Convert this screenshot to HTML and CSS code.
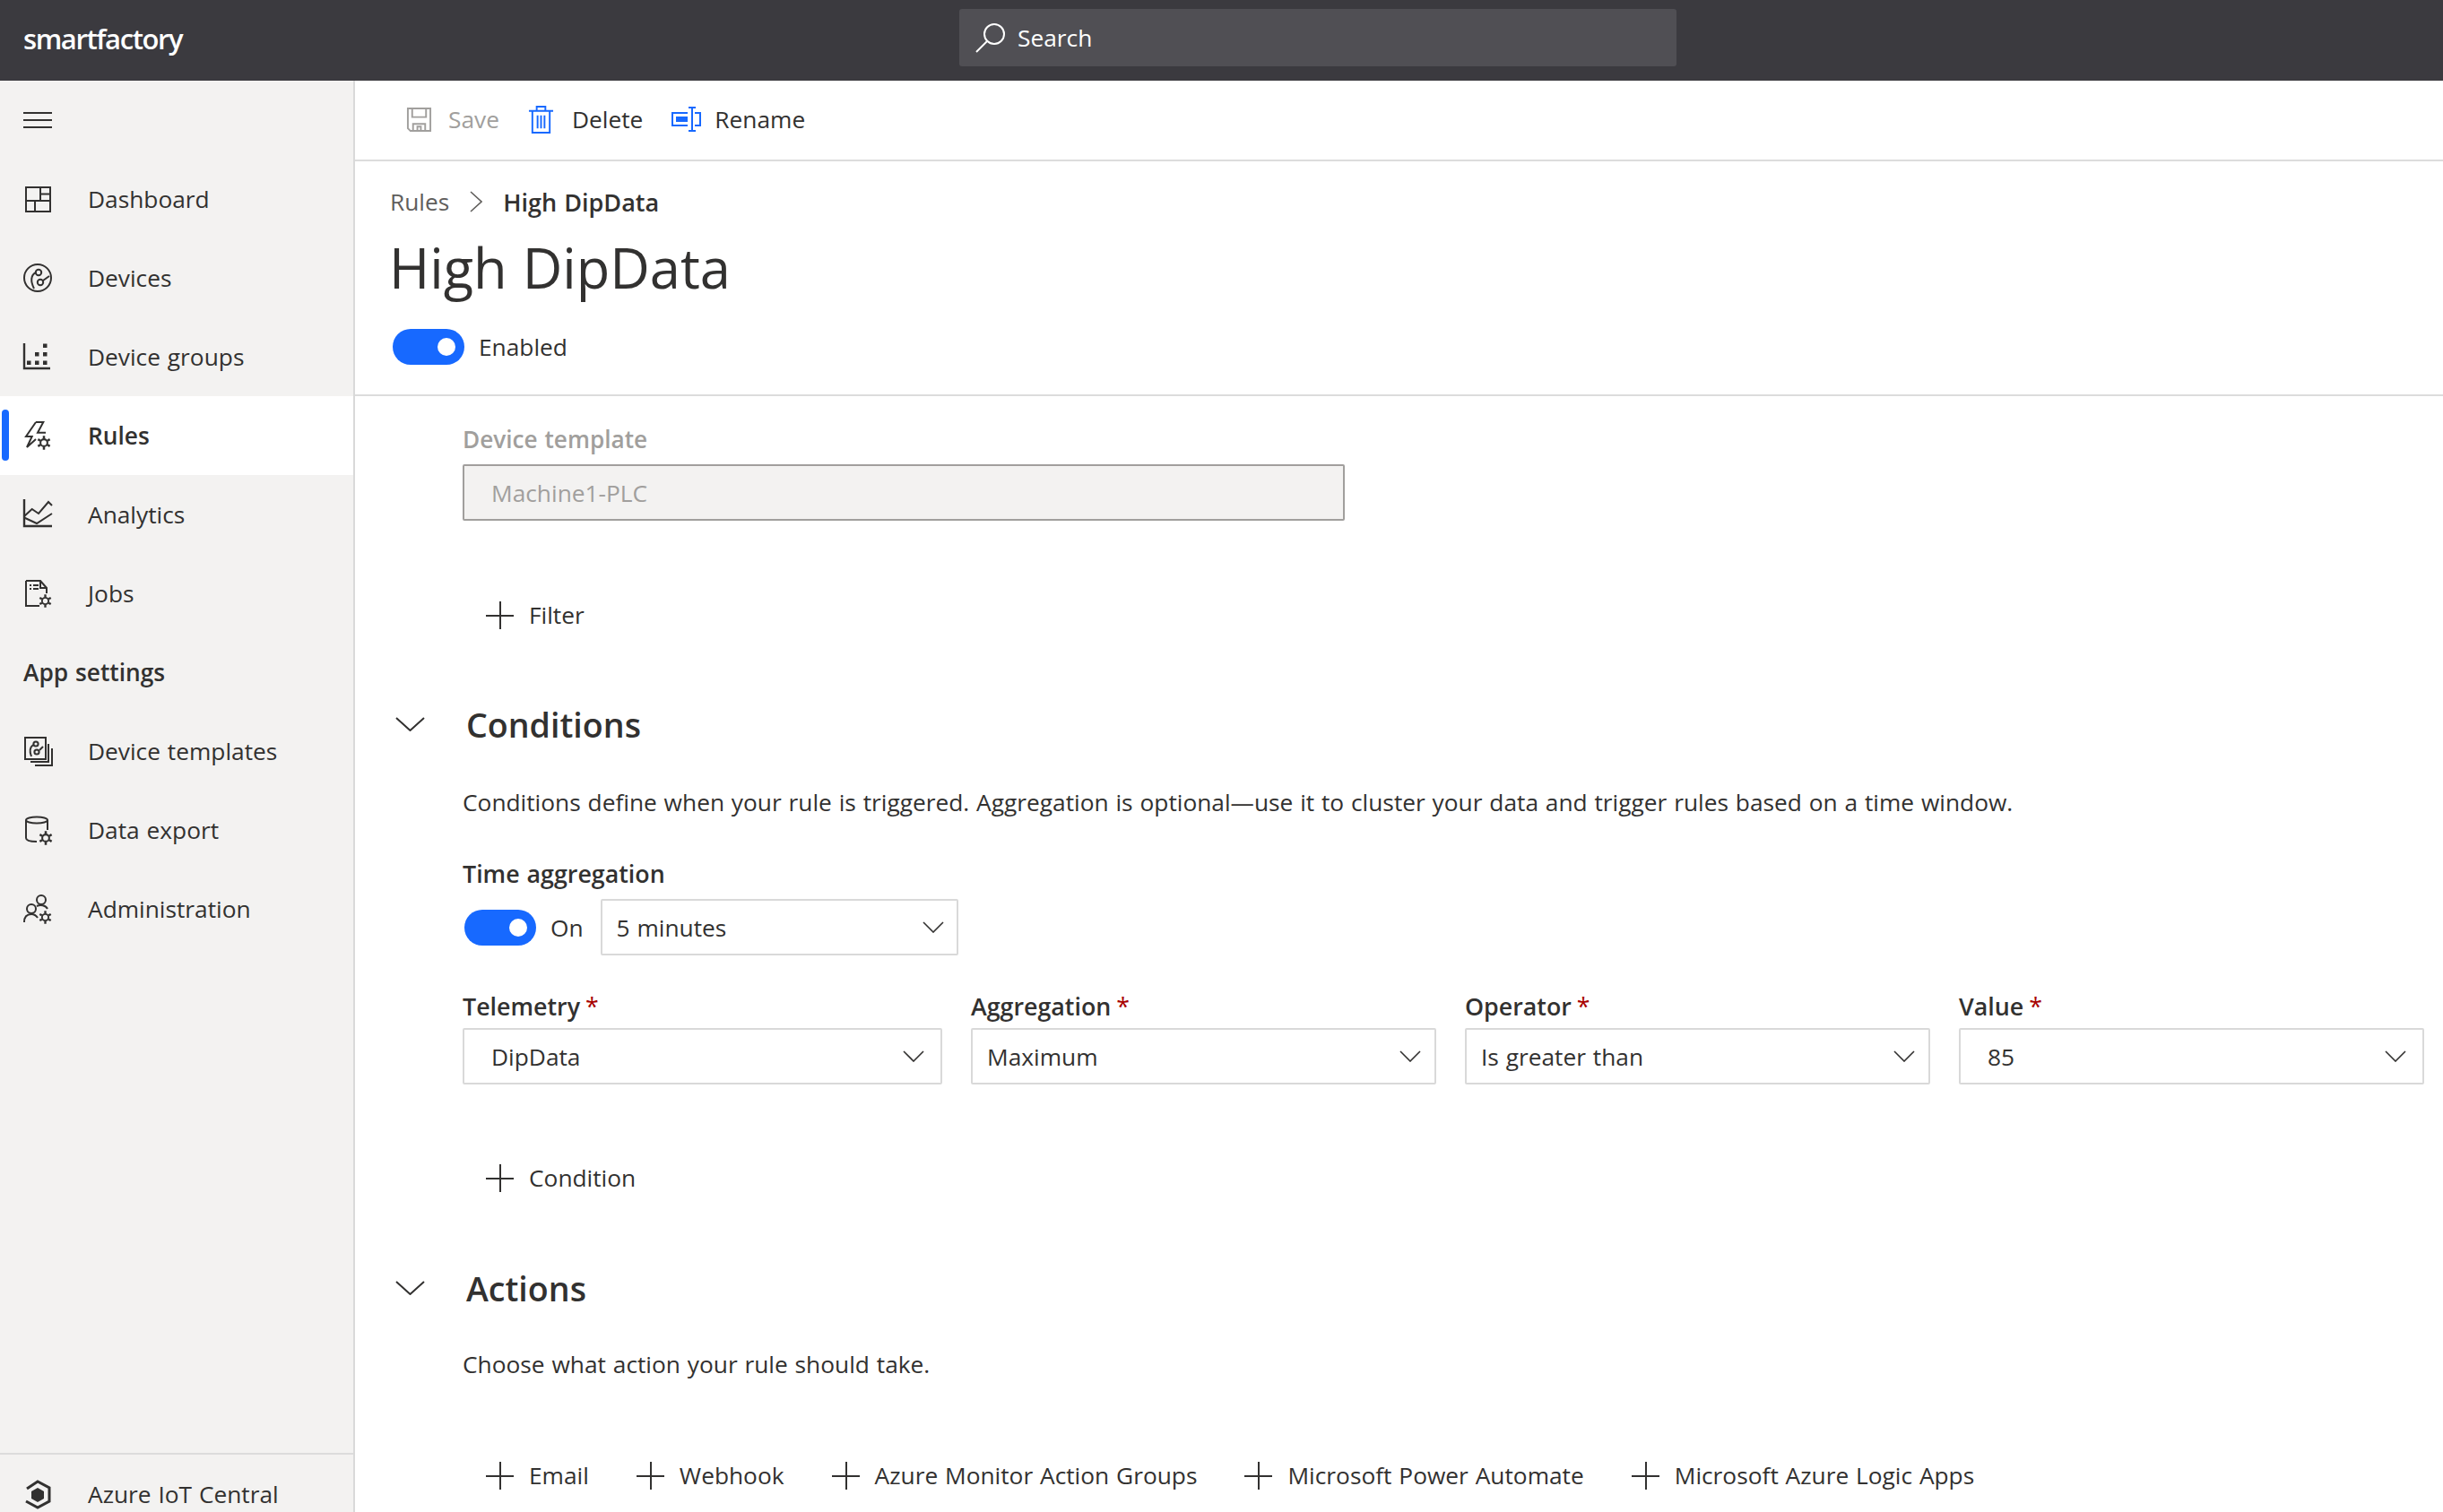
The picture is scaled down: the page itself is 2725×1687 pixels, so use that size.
FILE: index.html
```html
<!DOCTYPE html>
<html>
<head>
    <title>High DipData - smartfactory</title>
    <link rel="stylesheet" href="styles.css">
</head>
<body>
    <svg class="defs" width="0" height="0">
        <symbol id="gear" viewBox="0 0 14 14">
            <circle cx="7" cy="7" r="3.4" fill="none" stroke="currentColor" stroke-width="1.8"/>
            <path d="M7 0.3V3M7 11V13.7M1.2 3.65L3.5 5M10.5 9L12.8 10.35M1.2 10.35L3.5 9M10.5 5L12.8 3.65" fill="none" stroke="currentColor" stroke-width="2.2"/>
        </symbol>
    </svg>

    <header class="topbar">
        <div class="logo">smartfactory</div>
        <div class="search">
            <svg class="search-icon" viewBox="0 0 34 34"><circle cx="21" cy="13" r="11" fill="none" stroke="currentColor" stroke-width="2"/><path d="M13 21L1 33" fill="none" stroke="currentColor" stroke-width="2"/></svg>
            <span>Search</span>
        </div>
    </header>

    <div class="app">
        <nav class="sidebar">
            <div class="nav-item">
                <svg class="nav-icon" viewBox="0 0 34 34"><path d="M1 9H33M1 17H33M1 25H33" fill="none" stroke="currentColor" stroke-width="2"/></svg>
            </div>
            <a class="nav-item">
                <svg class="nav-icon" viewBox="0 0 34 34"><path d="M4 4H31V31H4ZM20 4V19M4 19H31M20 11.5H31M14 19V31" fill="none" stroke="currentColor" stroke-width="2"/></svg>
                <span>Dashboard</span>
            </a>
            <a class="nav-item">
                <svg class="nav-icon" viewBox="0 0 34 34"><circle cx="17" cy="17" r="15" fill="none" stroke="currentColor" stroke-width="2"/><circle cx="18" cy="11" r="3.2" fill="none" stroke="currentColor" stroke-width="2"/><circle cx="20" cy="22" r="3.2" fill="none" stroke="currentColor" stroke-width="2"/><path d="M15 11C9 14 9 21 13 29M23 20L30 15" fill="none" stroke="currentColor" stroke-width="2"/></svg>
                <span>Devices</span>
            </a>
            <a class="nav-item">
                <svg class="nav-icon" viewBox="0 0 34 34"><path d="M2 2V30H31" fill="none" stroke="currentColor" stroke-width="2.4"/><path d="M5 21.5h4.5v4.5h-4.5zM14 21.5h4.5v4.5h-4.5zM23 21.5h4.5v4.5h-4.5zM14 12h4.5v4.5h-4.5zM23 12h4.5v4.5h-4.5zM23 2.5h4.5v4.5h-4.5z" fill="currentColor"/></svg>
                <span>Device groups</span>
            </a>
            <a class="nav-item active">
                <svg class="nav-icon" viewBox="0 0 34 34"><path d="M15 2L4 18H10.7L5 30L15 21M15 2H23.3L17 13.7H26" fill="none" stroke="currentColor" stroke-width="2"/><use href="#gear" x="16" y="17" width="16" height="16"/></svg>
                <span>Rules</span>
            </a>
            <a class="nav-item">
                <svg class="nav-icon" viewBox="0 0 34 34"><path d="M2 0V30H33" fill="none" stroke="currentColor" stroke-width="2.4"/><path d="M2 19L10.7 11L18 16L29 3L33 7M2 20.5L16 27L33 16" fill="none" stroke="currentColor" stroke-width="2"/></svg>
                <span>Analytics</span>
            </a>
            <a class="nav-item">
                <svg class="nav-icon" viewBox="0 0 34 34"><path d="M4 3H20L27 11V17M20 3V11H27M19 31H4V3" fill="none" stroke="currentColor" stroke-width="2"/><path d="M8 7h2v2h-2zM12 7h6v2h-6zM8 11h2v2h-2zM12 11h6v2h-6z" fill="currentColor"/><use href="#gear" x="18" y="18" width="15" height="15"/></svg>
                <span>Jobs</span>
            </a>
            <div class="nav-item nav-heading">App settings</div>
            <a class="nav-item">
                <svg class="nav-icon" viewBox="0 0 34 34"><path d="M3 2H26V26H3Z" fill="none" stroke="currentColor" stroke-width="2"/><path d="M29 9V29H9M33 14V33H14" fill="none" stroke="currentColor" stroke-width="2"/><circle cx="15" cy="9" r="2.6" fill="none" stroke="currentColor" stroke-width="2"/><circle cx="16" cy="18" r="2.6" fill="none" stroke="currentColor" stroke-width="2"/><path d="M12 10C8 13 8 18 10 23M19 16L23 12" fill="none" stroke="currentColor" stroke-width="2"/></svg>
                <span>Device templates</span>
            </a>
            <a class="nav-item">
                <svg class="nav-icon" viewBox="0 0 34 34"><ellipse cx="16" cy="6" rx="12" ry="3.5" fill="none" stroke="currentColor" stroke-width="2"/><path d="M4 6V26C4 29 9 30 16 30M28 6V17" fill="none" stroke="currentColor" stroke-width="2"/><use href="#gear" x="18" y="18" width="16" height="16"/></svg>
                <span>Data export</span>
            </a>
            <a class="nav-item">
                <svg class="nav-icon" viewBox="0 0 34 34"><circle cx="21" cy="7" r="5" fill="none" stroke="currentColor" stroke-width="2"/><circle cx="10" cy="17" r="5" fill="none" stroke="currentColor" stroke-width="2"/><path d="M2 32C2 26 5 23 10 23C13 23 15 24 17 27M16 14C20 12 26 13 28 17" fill="none" stroke="currentColor" stroke-width="2"/><use href="#gear" x="18" y="19" width="15" height="15"/></svg>
                <span>Administration</span>
            </a>
            <div class="nav-bottom">
                <a class="nav-item">
                    <svg class="nav-icon" viewBox="0 0 34 34"><path d="M5 11L17 3L30 10V25L17 32L4 25" fill="none" stroke="currentColor" stroke-width="3"/><path d="M17 10L24 14V22L17 26L10 22V14Z" fill="currentColor"/></svg>
                    <span>Azure IoT Central</span>
                </a>
            </div>
        </nav>

        <main class="main">
            <div class="toolbar">
                <button class="tool disabled">
                    <svg class="tool-icon" viewBox="0 0 30 30"><path d="M2 2H28V28H5L2 25Z M7 2V12H23V2 M8 28V20H22V28 M13 28V23H17V28" fill="none" stroke="currentColor" stroke-width="2"/></svg>
                    <span>Save</span>
                </button>
                <button class="tool tool-delete">
                    <svg class="tool-icon blue" viewBox="0 0 30 34"><path d="M1 7H29M5 7V32H25V7M10 7V2H20V7M11 12V27M15 12V27M19 12V27" fill="none" stroke="currentColor" stroke-width="2"/></svg>
                    <span>Delete</span>
                </button>
                <button class="tool tool-rename">
                    <svg class="tool-icon wide blue" viewBox="0 0 34 30"><path d="M18 8H1V22H18M26 8H32V22H26M19 2H27M19 28H27M23 2V28" fill="none" stroke="currentColor" stroke-width="2"/><path d="M5 12H18V18H5Z" fill="currentColor"/></svg>
                    <span>Rename</span>
                </button>
            </div>

            <div class="head">
                <div class="crumbs">
                    <span class="crumb-link">Rules</span>
                    <svg class="crumb-sep" viewBox="0 0 14 24"><path d="M1 1L13 12L1 23" fill="none" stroke="currentColor" stroke-width="1.6"/></svg>
                    <span class="crumb-current">High DipData</span>
                </div>
                <h1>High DipData</h1>
                <div class="toggle-row">
                    <span class="toggle"></span>
                    <span>Enabled</span>
                </div>
            </div>

            <div class="form">
                <label class="label label-first disabled-label">Device template</label>
                <div class="input-disabled">Machine1-PLC</div>
                <button class="add add-filter"><span class="plus"></span>Filter</button>

                <div class="section-head section-conditions">
                    <svg class="section-chevron" viewBox="0 0 33 16"><path d="M1 1L16.5 15L32 1" fill="none" stroke="currentColor" stroke-width="2"/></svg>
                    <h2>Conditions</h2>
                </div>
                <p class="desc">Conditions define when your rule is triggered. Aggregation is optional—use it to cluster your data and trigger rules based on a time window.</p>

                <label class="label label-time">Time aggregation</label>
                <div class="time-row">
                    <span class="toggle"></span>
                    <span class="on-text">On</span>
                    <div class="select select-time">
                        <span>5 minutes</span>
                        <svg class="chevron" viewBox="0 0 24 13"><path d="M1 1L12 12L23 1" fill="none" stroke="currentColor" stroke-width="1.6"/></svg>
                    </div>
                </div>

                <div class="fields">
                    <div>
                        <label class="label">Telemetry <em>*</em></label>
                        <div class="select pad-wide"><span>DipData</span><svg class="chevron" viewBox="0 0 24 13"><path d="M1 1L12 12L23 1" fill="none" stroke="currentColor" stroke-width="1.6"/></svg></div>
                    </div>
                    <div>
                        <label class="label">Aggregation <em>*</em></label>
                        <div class="select"><span>Maximum</span><svg class="chevron" viewBox="0 0 24 13"><path d="M1 1L12 12L23 1" fill="none" stroke="currentColor" stroke-width="1.6"/></svg></div>
                    </div>
                    <div>
                        <label class="label">Operator <em>*</em></label>
                        <div class="select"><span>Is greater than</span><svg class="chevron" viewBox="0 0 24 13"><path d="M1 1L12 12L23 1" fill="none" stroke="currentColor" stroke-width="1.6"/></svg></div>
                    </div>
                    <div>
                        <label class="label">Value <em>*</em></label>
                        <div class="select pad-wide"><span>85</span><svg class="chevron" viewBox="0 0 24 13"><path d="M1 1L12 12L23 1" fill="none" stroke="currentColor" stroke-width="1.6"/></svg></div>
                    </div>
                </div>

                <button class="add add-condition"><span class="plus"></span>Condition</button>

                <div class="section-head section-actions">
                    <svg class="section-chevron" viewBox="0 0 33 16"><path d="M1 1L16.5 15L32 1" fill="none" stroke="currentColor" stroke-width="2"/></svg>
                    <h2>Actions</h2>
                </div>
                <p class="desc desc-actions">Choose what action your rule should take.</p>

                <div class="action-row">
                    <button class="add"><span class="plus"></span>Email</button>
                    <button class="add"><span class="plus"></span>Webhook</button>
                    <button class="add"><span class="plus"></span>Azure Monitor Action Groups</button>
                    <button class="add"><span class="plus"></span>Microsoft Power Automate</button>
                    <button class="add"><span class="plus"></span>Microsoft Azure Logic Apps</button>
                </div>
            </div>
        </main>
    </div>
</body>
</html>
```

FILE: styles.css
```css
* { box-sizing: border-box; }
html, body { height: 100%; }
body { margin: 0; overflow: hidden; background: #fff; color: #323130; font-family: "Open Sans", "Noto Sans", sans-serif; font-size: 26.3px; word-spacing: 1px; }
.defs { position: absolute; }
button { font: inherit; word-spacing: inherit; color: inherit; background: none; border: none; padding: 0; }

.topbar { height: 90px; background: #3b3a3f; display: flex; align-items: flex-start; color: #fff; }
.logo { width: 1070px; padding-left: 26px; padding-top: 22px; font-size: 31px; font-weight: 600; letter-spacing: -1.4px; }
.search { width: 800px; height: 64px; margin-top: 10px; background: #504f54; border-radius: 3px; display: flex; align-items: center; padding-left: 18px; gap: 13px; }
.search-icon { width: 34px; height: 34px; }

.app { display: flex; height: calc(100% - 90px); }

.sidebar { width: 396px; flex: none; background: #f3f2f1; border-right: 2px solid #d9d9d9; display: flex; flex-direction: column; }
.nav-item { height: 88px; flex: none; display: flex; align-items: center; padding-left: 25px; gap: 39px; }
.nav-icon { width: 34px; height: 34px; flex: none; }
.nav-heading { font-weight: 600; padding-left: 26px; }
.nav-item.active { background: #fff; font-weight: 600; position: relative; }
.nav-item.active::before { content: ""; position: absolute; left: 2px; top: 15px; width: 8px; height: 57px; border-radius: 4px; background: #1769ff; }
.nav-bottom { margin-top: auto; border-top: 2px solid #dcdcdc; height: 66px; overflow: visible; }

.main { flex: 1; min-width: 0; }

.toolbar { height: 90px; padding-bottom: 2px; border-bottom: 2px solid #dcdcdc; display: flex; align-items: center; }
.tool { display: flex; align-items: center; gap: 18px; }
.tool.disabled { margin-left: 57px; color: #a19f9d; }
.tool-icon { width: 29px; height: 29px; }
.tool-icon.blue { color: #1769ff; height: 33px; }
.tool-icon.wide { width: 34px; height: 30px; }
.tool-delete { margin-left: 32px; gap: 20px; }
.tool-rename { margin-left: 32px; gap: 14px; }

.head { height: 262px; padding-left: 39px; border-bottom: 2px solid #dcdcdc; }
.crumbs { height: 90px; display: flex; align-items: center; }
.crumb-link { color: #605e5c; }
.crumb-sep { width: 14px; height: 24px; margin: 0 23px; color: #605e5c; }
.crumb-current { font-weight: 600; font-size: 27px; }
h1 { margin: -2px 0 2px -1px; height: 60px; font-size: 61.4px; font-weight: 400; line-height: 60px; }
.toggle-row { display: flex; align-items: center; gap: 16px; margin-top: 39px; padding-left: 3px; }
.toggle { width: 80px; height: 40px; border-radius: 20px; background: #1769ff; position: relative; flex: none; }
.toggle::after { content: ""; position: absolute; right: 10px; top: 10px; width: 20px; height: 20px; border-radius: 50%; background: #fff; }

.form { padding-left: 120px; padding-right: 21px; }
.label { display: block; height: 40px; line-height: 40px; font-weight: 600; font-size: 26.8px; }
.label em { font-style: normal; font-weight: 400; color: #a80000; margin-left: -2px; }
.label-first { margin-top: 28px; }
.disabled-label { color: #a19f9d; font-size: 26.2px; }
.input-disabled { width: 984px; height: 63px; margin-top: 8px; background: #f3f2f1; border: 2px solid #a19f9d; border-radius: 2px; color: #a19f9d; display: flex; align-items: center; padding-left: 30px; }

.add { display: flex; align-items: center; height: 44px; padding-left: 26px; gap: 17px; }
.plus { width: 31px; height: 31px; position: relative; flex: none; }
.plus::before, .plus::after { content: ""; position: absolute; background: #323130; }
.plus::before { left: 0; right: 0; top: 15px; height: 2px; }
.plus::after { top: 0; bottom: 0; left: 15px; width: 2px; }
.add-filter { margin-top: 83px; }
.add-condition { margin-top: 82px; }

.section-head { display: flex; align-items: center; height: 50px; margin-left: -75px; gap: 46px; }
.section-chevron { width: 33px; height: 16px; }
.section-conditions { margin-top: 75px; }
.section-actions { margin-top: 76px; }
h2 { margin: 0; font-size: 37.6px; font-weight: 600; word-spacing: 0; }
.desc { margin: 42px 0 0; height: 40px; line-height: 40px; }
.desc-actions { margin-top: 40px; }

.label-time { margin-top: 40px; }
.time-row { display: flex; align-items: center; margin-top: 8px; padding-left: 2px; }
.on-text { margin-left: 16px; margin-right: 19px; }
.select { height: 63px; border: 2px solid #d9d9d9; border-radius: 2px; background: #fff; display: flex; align-items: center; justify-content: space-between; padding: 0 15px 0 16px; }
.select-time { width: 399px; padding-right: 14px; }
.pad-wide { padding-left: 30px; padding-right: 18px; }
.chevron { width: 24px; height: 13px; }

.fields { display: grid; grid-template-columns: 535px 519px 519px 519px; column-gap: 32px; margin-top: 37px; }
.fields .select { margin-top: 4px; }

.action-row { display: flex; margin-top: 82px; }
.action-row .add + .add { margin-left: 27px; }
```
